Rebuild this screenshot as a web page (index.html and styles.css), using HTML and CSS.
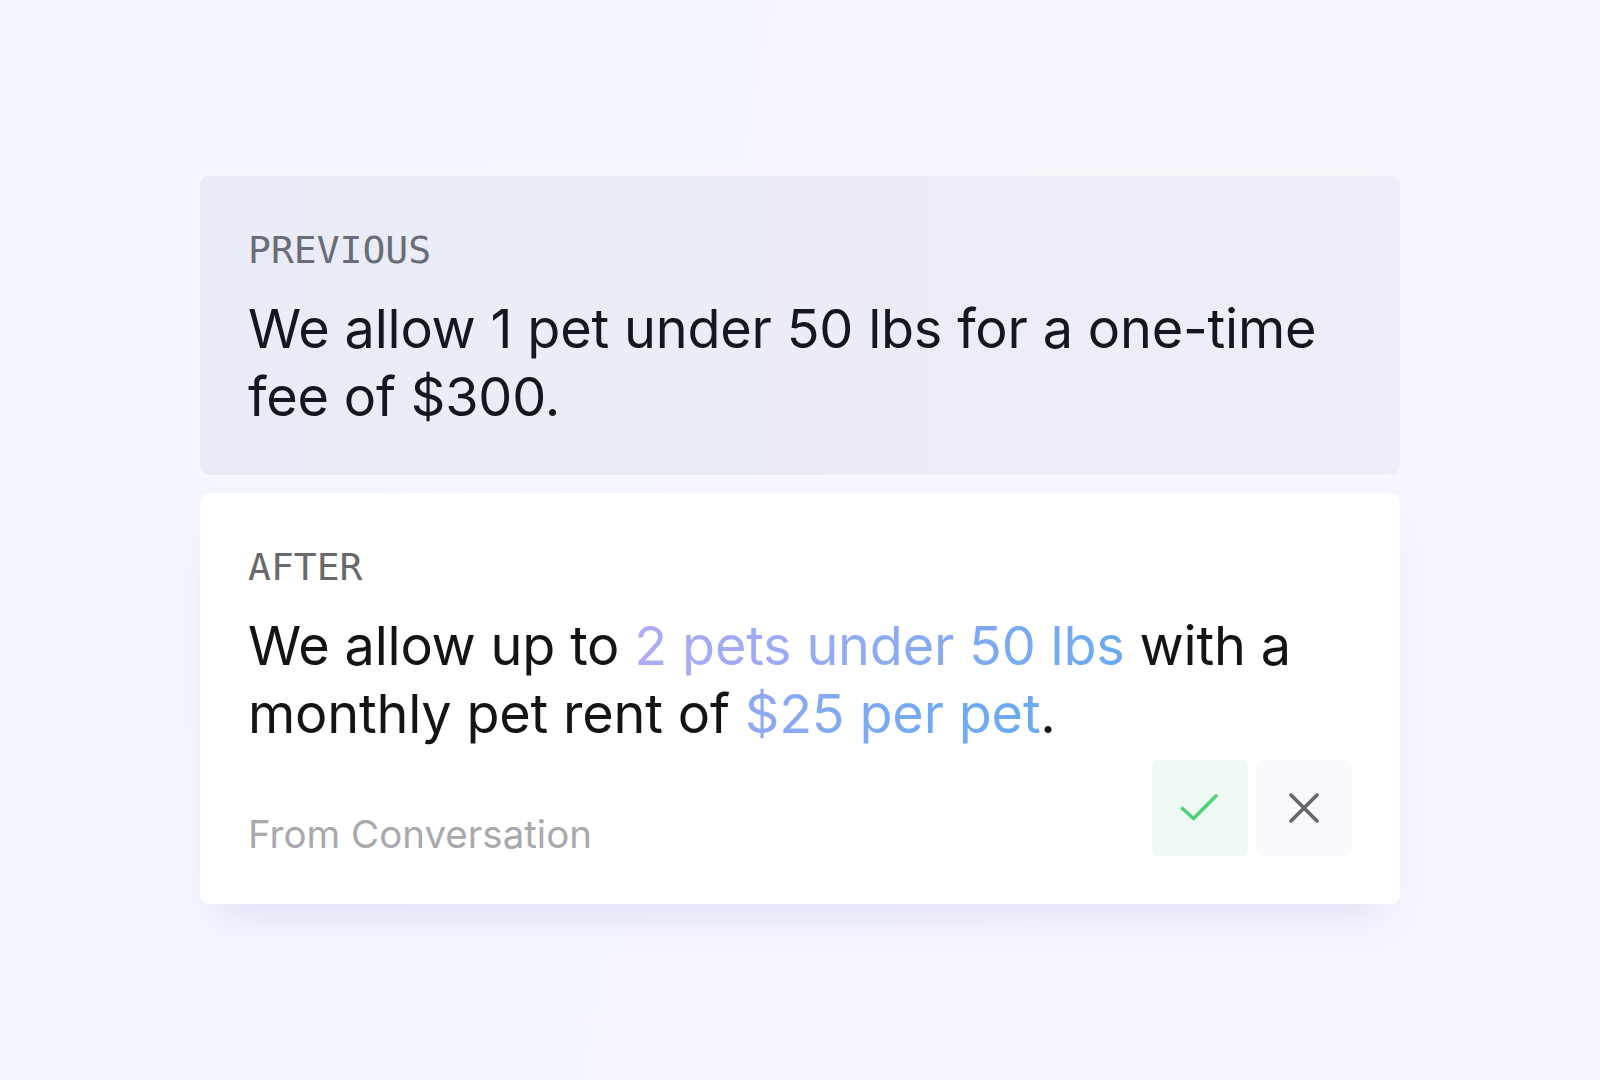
FILE: index.html
```html
<!DOCTYPE html>
<html lang="en">
<head>
    <meta charset="UTF-8">
    <meta name="viewport" content="width=device-width, initial-scale=1.0">
    <title>Policy Update</title>
    <link rel="stylesheet" href="styles.css">
</head>
<body>
    <div class="diff">
        <div class="card card-previous">
            <div class="label">PREVIOUS</div>
            <p class="policy">We allow 1 pet under 50 lbs for a one-time fee of $300.</p>
        </div>

        <div class="card card-after">
            <div class="label label-after">AFTER</div>
            <p class="policy">We allow up to <span class="changed changed-a">2 pets under 50 lbs</span> with a monthly pet rent of <span class="changed changed-b">$25 per pet</span>.</p>
            <div class="card-footer">
                <span class="source">From Conversation</span>
                <div class="actions">
                    <button class="action action-accept" type="button" aria-label="Accept">
                        <svg width="40" height="40" viewBox="0 0 40 40" fill="none">
                            <path d="M2.5 13.5 L13.5 23.5 L36 1" stroke="#4fd17a" stroke-width="3.6" stroke-linecap="round" stroke-linejoin="round" transform="translate(0 7)"/>
                        </svg>
                    </button>
                    <button class="action action-reject" type="button" aria-label="Reject">
                        <svg width="32" height="32" viewBox="0 0 32 32" fill="none">
                            <path d="M3 3 L29 29 M29 3 L3 29" stroke="#68686c" stroke-width="3.8" stroke-linecap="round"/>
                        </svg>
                    </button>
                </div>
            </div>
        </div>
    </div>
</body>
</html>
```

FILE: styles.css
```css
body {
    font-family: 'Inter', 'Noto Sans', sans-serif;
    background: linear-gradient(100deg, #f2f5fe 0%, #f4f5fe 45%, #f7f5fe 100%);
    display: flex;
    justify-content: center;
    align-items: center;
    height: 100vh;
    margin: 0;
}
.diff {
    width: 1200px;
    display: flex;
    flex-direction: column;
    gap: 18px;
}
.card {
    border-radius: 9px;
    padding: 52px 48px 44px;
}
.card-previous {
    background: linear-gradient(90deg, #e9ecf6 0%, #ebecf6 50%, #eeeef7 100%);
    box-shadow: 0 0 24px rgba(255, 255, 255, 0.6);
}
.card-after {
    background: #ffffff;
    padding-bottom: 48px;
    box-shadow: 0 26px 40px -18px rgba(110, 110, 190, 0.16);
}
.label {
    font-family: 'DejaVu Sans Mono', 'Liberation Mono', monospace;
    font-size: 38px;
    line-height: 44px;
    color: #696d78;
}
.label-after {
    color: #69696b;
}
.policy {
    margin: 23px 0 0;
    font-size: 54px;
    line-height: 68px;
    letter-spacing: -0.2px;
    color: #15171e;
}
.card-after .policy {
    color: #141416;
}
.changed {
    -webkit-background-clip: text;
    background-clip: text;
    color: transparent;
}
.changed-a {
    background-image: linear-gradient(90deg, #afabf7 0%, #8faaf3 50%, #69aaf1 100%);
}
.changed-b {
    background-image: linear-gradient(90deg, #93a8f3 0%, #78a9f2 50%, #69abf1 100%);
}
.card-footer {
    margin-top: 12px;
    display: flex;
    justify-content: space-between;
    align-items: flex-end;
}
.source {
    font-size: 38.5px;
    line-height: 43px;
    color: #a9a9ad;
}
.actions {
    display: flex;
    gap: 8px;
}
.action {
    width: 96px;
    height: 96px;
    border: none;
    border-radius: 8px;
    display: flex;
    justify-content: center;
    align-items: center;
    padding: 0;
    cursor: pointer;
}
.action-accept {
    background: #eef9f3;
}
.action-reject {
    background: #f9f8fd;
}
```
